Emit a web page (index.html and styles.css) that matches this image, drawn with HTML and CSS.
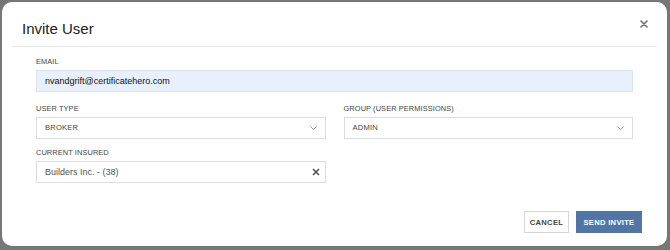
FILE: index.html
```html
<!doctype html>
<html lang="en">
<head>
    <meta charset="UTF-8">
    <title>Invite User</title>
    <link rel="stylesheet" href="styles.css">
</head>
<body>
    <div class="modal">
        <div class="modal-head">
            <h2 class="title">Invite User</h2>
            <span class="close">
                <svg width="8" height="8" viewBox="0 0 8 8"><path d="M1 1L7 7M7 1L1 7" stroke="#707070" stroke-width="1.6" stroke-linecap="round"/></svg>
            </span>
        </div>
        <div class="modal-body">
            <div class="field">
                <label class="label">Email</label>
                <div class="input autofill">nvandgrift@certificatehero.com</div>
            </div>
            <div class="row row-tight">
                <div class="field">
                    <label class="label">User Type</label>
                    <div class="input select">
                        <span>BROKER</span>
                        <svg width="7" height="4" viewBox="0 0 7 4"><path d="M0.5 0.5L3.5 3.5L6.5 0.5" fill="none" stroke="#999" stroke-width="1"/></svg>
                    </div>
                </div>
                <div class="field">
                    <label class="label">Group (User Permissions)</label>
                    <div class="input select">
                        <span>ADMIN</span>
                        <svg width="7" height="4" viewBox="0 0 7 4"><path d="M0.5 0.5L3.5 3.5L6.5 0.5" fill="none" stroke="#999" stroke-width="1"/></svg>
                    </div>
                </div>
            </div>
            <div class="row">
                <div class="field">
                    <label class="label">Current Insured</label>
                    <div class="input select insured">
                        <span>Builders Inc. - (38)</span>
                        <svg width="8" height="8" viewBox="0 0 8 8"><path d="M1 1L7 7M7 1L1 7" stroke="#555" stroke-width="1.7"/></svg>
                    </div>
                </div>
                <div></div>
            </div>
        </div>
        <div class="modal-foot">
            <button class="btn btn-cancel">Cancel</button>
            <button class="btn btn-primary">Send Invite</button>
        </div>
    </div>
</body>
</html>
```

FILE: styles.css
```css
* {
    margin: 0;
    padding: 0;
    box-sizing: border-box;
}
body {
    background: #777;
    font-family: "Liberation Sans", Arial, sans-serif;
    color: #333;
}
.modal {
    margin: 2px 3px 0 2px;
    height: 244px;
    background: #fff;
    border-radius: 10px;
    display: flex;
    flex-direction: column;
}
.modal-head {
    height: 45px;
    margin: 0 10px 0 10px;
    padding: 0 10px 0 10px;
    border-bottom: 1px solid #e6e6e6;
    display: flex;
    align-items: center;
    justify-content: space-between;
}
.title {
    font-size: 15px;
    font-weight: normal;
    color: #222;
    margin-top: 8px;
}
.close {
    display: flex;
    margin-right: -1px;
}
.modal-body {
    padding: 10px 34px 0 34px;
}
.row {
    display: grid;
    grid-template-columns: 1fr 1fr;
    column-gap: 18px;
}
.field {
    margin-bottom: 12px;
}
.row-tight .field {
    margin-bottom: 9px;
}
.label {
    display: block;
    font-size: 7.4px;
    line-height: 10px;
    text-transform: uppercase;
    color: #444;
    margin-bottom: 3px;
    letter-spacing: 0.1px;
}
.input {
    height: 22px;
    border: 1px solid #ddd;
    padding: 0 8px;
    font-size: 9px;
    line-height: 20px;
    color: #333;
}
.autofill {
    background: #e8f0fe;
    border-color: #dde3ee;
    color: #111;
}
.select {
    display: flex;
    align-items: center;
    justify-content: space-between;
    font-size: 7.6px;
    color: #444;
    letter-spacing: 0.2px;
    padding-right: 8px;
}
.insured {
    font-size: 9px;
    color: #555;
    letter-spacing: 0;
    padding-right: 5px;
}
.modal-foot {
    margin-top: auto;
    padding: 0 25px 13px 0;
    display: flex;
    justify-content: flex-end;
    gap: 7px;
}
.btn {
    height: 22px;
    font-family: "Liberation Sans", Arial, sans-serif;
    font-size: 7.6px;
    font-weight: bold;
    text-transform: uppercase;
    letter-spacing: 0.3px;
    cursor: pointer;
}
.btn-cancel {
    width: 45px;
    background: #fff;
    border: 1px solid #d6d6d6;
    color: #444;
}
.btn-primary {
    width: 66px;
    background: #5275a6;
    border: 1px solid #5275a6;
    color: #fff;
}
```
